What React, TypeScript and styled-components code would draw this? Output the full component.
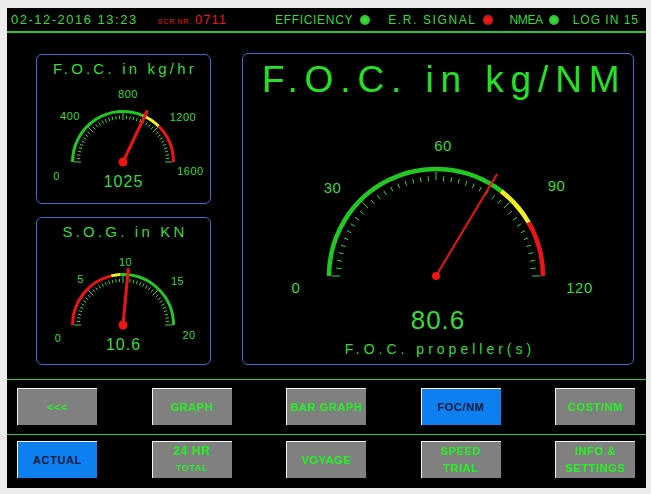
import React from "react";
import styled, { createGlobalStyle } from "styled-components";

const GREEN = "#35dc35";
const ARC_GREEN = "#22c822";
const LINE_GREEN = "#2ec82e";
const RED = "#ee1414";
const YELLOW = "#f2f020";
const FONT = `"Liberation Sans", Arial, sans-serif`;

const GlobalStyle = createGlobalStyle`
  html, body { margin: 0; padding: 0; background: #ececec; }
  body { font-family: ${FONT}; }
`;

const Page = styled.div`
  width: 651px;
  height: 494px;
  box-sizing: border-box;
  padding: 8px 0 0 7px;
`;

const Screen = styled.div`
  width: 639px;
  height: 480px;
  background: #000;
  display: flex;
  flex-direction: column;
`;

const Header = styled.header`
  height: 23px;
  flex: none;
  display: flex;
  align-items: center;
  padding: 0 7px 0 4px;
  border-bottom: 2px solid ${LINE_GREEN};
  color: ${GREEN};
`;

const DateTime = styled.span`
  font-size: 13px;
  letter-spacing: 1.5px;
  white-space: pre;
`;

const ScrLabel = styled.span`
  margin-left: 20px;
  color: ${RED};
  font-size: 7px;
  letter-spacing: 0.8px;
  align-self: center;
  padding-top: 4px;
`;

const ScrValue = styled.span`
  margin-left: 3px;
  color: ${RED};
  font-size: 13px;
  letter-spacing: 1px;
`;

const Status = styled.div`
  margin-left: auto;
  display: flex;
  align-items: center;
  font-size: 12px;
  letter-spacing: 1px;
`;

const StatusItem = styled.span<{ $gap: number; $ls?: number }>`
  margin-left: ${(p) => p.$gap}px;
  letter-spacing: ${(p) => p.$ls ?? 1}px;
  white-space: pre;
`;

const Lamp = styled.span<{ $color: "green" | "red"; $gap: number }>`
  width: 10px;
  height: 10px;
  border-radius: 50%;
  margin-left: ${(p) => p.$gap}px;
  background: ${(p) =>
    p.$color === "green"
      ? "radial-gradient(circle at 50% 50%, #3ee83e 0%, #2cc82c 55%, #6f9a6f 100%)"
      : "radial-gradient(circle at 50% 50%, #ff2020 0%, #e01010 55%, #a06060 100%)"};
`;

const Main = styled.main`
  flex: 1;
  display: flex;
  align-items: flex-start;
  padding: 20px 0 0 29px;
  gap: 31px;
`;

const LeftColumn = styled.div`
  width: 175px;
  margin-top: 1px;
  display: flex;
  flex-direction: column;
  gap: 13px;
`;

const Panel = styled.section<{ $h: number; $w: number }>`
  box-sizing: border-box;
  width: ${(p) => p.$w}px;
  height: ${(p) => p.$h}px;
  border: 1px solid #3a6cd2;
  border-radius: 6px;
  padding-top: 5px;
  display: flex;
  flex-direction: column;
  align-items: center;
  color: ${GREEN};
`;

const SmallTitle = styled.div`
  font-size: 15px;
  line-height: 17px;
  letter-spacing: 3.2px;
  padding-left: 3px;
  white-space: pre;
`;

const BigTitle = styled.div`
  align-self: flex-start;
  padding-left: 19px;
  font-size: 37px;
  line-height: 42px;
  letter-spacing: 6.9px;
  color: #26e026;
  white-space: pre;
`;

const Value = styled.div<{ $size: number; $lh: number }>`
  font-size: ${(p) => p.$size}px;
  line-height: ${(p) => p.$lh}px;
  letter-spacing: 1px;
`;

const Caption = styled.div`
  margin-top: 6px;
  font-size: 14px;
  line-height: 16px;
  letter-spacing: 4px;
  padding-left: 4px;
  white-space: pre;
`;

const DialSvg = styled.svg`
  display: block;
  overflow: visible;
  flex: none;
`;

const ButtonRow = styled.nav<{ $pt: number; $pb: number }>`
  flex: none;
  border-top: 1px solid ${LINE_GREEN};
  padding: ${(p) => p.$pt}px 11px ${(p) => p.$pb}px 10px;
  display: grid;
  grid-template-columns: repeat(5, 80px);
  justify-content: space-between;
`;

const Button = styled.div<{ $active?: boolean }>`
  box-sizing: border-box;
  height: 37px;
  border-top: 1px solid #f4f4f4;
  border-left: 1px solid #f4f4f4;
  background: ${(p) => (p.$active ? "#0d7ff0" : "#808080")};
  color: ${(p) => (p.$active ? "#0b1a3a" : "#22ee22")};
  display: flex;
  flex-direction: column;
  align-items: center;
  justify-content: center;
  font-weight: bold;
  font-size: 11px;
  line-height: 17px;
  letter-spacing: 0.6px;
  white-space: pre;
`;

const BtnLine = styled.span<{ $size?: number }>`
  font-size: ${(p) => p.$size ?? 11}px;
`;

type Seg = { from: number; to: number; color: string };
type Lbl = { text: string; dx: number; dy: number };

interface DialProps {
  width: number;
  height: number;
  cx: number;
  cy: number;
  r: number;
  stroke: number;
  min: number;
  max: number;
  value: number;
  segments: Seg[];
  divisions: number;
  majorEvery: number;
  minorR: [number, number];
  majorR: [number, number];
  labels: Lbl[];
  labelSize: number;
  needleLen: number;
  needleWidth: number;
  dotR: number;
}

function Dial(p: DialProps) {
  const ang = (v: number) => Math.PI - ((v - p.min) / (p.max - p.min)) * Math.PI;
  const pt = (v: number, r: number): [number, number] => {
    const a = ang(v);
    return [p.cx + r * Math.cos(a), p.cy - r * Math.sin(a)];
  };
  const arc = (a: number, b: number) => {
    const [x1, y1] = pt(a, p.r);
    const [x2, y2] = pt(b, p.r);
    return `M${x1.toFixed(2)} ${y1.toFixed(2)} A${p.r} ${p.r} 0 0 1 ${x2.toFixed(2)} ${y2.toFixed(2)}`;
  };
  const ticks = [];
  for (let i = 0; i <= p.divisions; i++) {
    const v = p.min + ((p.max - p.min) * i) / p.divisions;
    const major = i % p.majorEvery === 0;
    const [r1, r2] = major ? p.majorR : p.minorR;
    const [x1, y1] = pt(v, r1);
    const [x2, y2] = pt(v, r2);
    ticks.push(
      <line key={i} x1={x1} y1={y1} x2={x2} y2={y2} stroke="#3ad23a" strokeWidth={1} />
    );
  }
  const [nx, ny] = pt(p.value, p.needleLen);
  return (
    <DialSvg width={p.width} height={p.height} viewBox={`0 0 ${p.width} ${p.height}`}>
      {p.segments.map((s, i) => (
        <path key={i} d={arc(s.from, s.to)} fill="none" stroke={s.color} strokeWidth={p.stroke} />
      ))}
      {ticks}
      {p.labels.map((l) => (
        <text
          key={l.text}
          x={p.cx + l.dx}
          y={p.cy + l.dy}
          textAnchor="middle"
          dominantBaseline="central"
          fontSize={p.labelSize}
          fontFamily={FONT}
          letterSpacing={0.5}
          fill={GREEN}
        >
          {l.text}
        </text>
      ))}
      <line x1={p.cx} y1={p.cy} x2={nx} y2={ny} stroke={RED} strokeWidth={p.needleWidth} />
      <circle cx={p.cx} cy={p.cy} r={p.dotR} fill={RED} />
    </DialSvg>
  );
}

const smallBase = {
  width: 173,
  height: 96,
  cx: 86,
  cy: 85,
  r: 50.5,
  stroke: 3,
  divisions: 40,
  majorEvery: 10,
  minorR: [43, 46.5] as [number, number],
  majorR: [42, 49] as [number, number],
  labelSize: 11,
  needleLen: 57,
  needleWidth: 3,
  dotR: 4.5,
};

export default function App() {
  return (
    <Page>
      <GlobalStyle />
      <Screen>
        <Header>
          <DateTime>02-12-2016 13:23</DateTime>
          <ScrLabel>SCR.NR.</ScrLabel>
          <ScrValue>0711</ScrValue>
          <Status>
            <StatusItem $gap={0} $ls={0.7}>EFFICIENCY</StatusItem>
            <Lamp $color="green" $gap={7} />
            <StatusItem $gap={18} $ls={1.6}>E.R. SIGNAL</StatusItem>
            <Lamp $color="red" $gap={6} />
            <StatusItem $gap={17} $ls={-0.4}>NMEA</StatusItem>
            <Lamp $color="green" $gap={6} />
            <StatusItem $gap={14}>LOG IN 15</StatusItem>
          </Status>
        </Header>

        <Main>
          <LeftColumn>
            <Panel $w={175} $h={150}>
              <SmallTitle>F.O.C. in kg/hr</SmallTitle>
              <Dial
                {...smallBase}
                min={0}
                max={1600}
                value={1025}
                segments={[
                  { from: 0, to: 1000, color: ARC_GREEN },
                  { from: 1000, to: 1200, color: YELLOW },
                  { from: 1200, to: 1600, color: RED },
                ]}
                labels={[
                  { text: "0", dx: -66.5, dy: 13.5 },
                  { text: "400", dx: -53, dy: -46 },
                  { text: "800", dx: 5, dy: -68 },
                  { text: "1200", dx: 60, dy: -45 },
                  { text: "1600", dx: 67.5, dy: 9 },
                ]}
              />
              <Value $size={16} $lh={18}>1025</Value>
            </Panel>
            <Panel $w={175} $h={148}>
              <SmallTitle>S.O.G. in KN</SmallTitle>
              <Dial
                {...smallBase}
                min={0}
                max={20}
                value={10.6}
                segments={[
                  { from: 0, to: 8.5, color: RED },
                  { from: 8.5, to: 9.7, color: YELLOW },
                  { from: 9.7, to: 20, color: ARC_GREEN },
                ]}
                labels={[
                  { text: "0", dx: -65, dy: 13 },
                  { text: "5", dx: -42.5, dy: -46.5 },
                  { text: "10", dx: 2.5, dy: -63.5 },
                  { text: "15", dx: 54.5, dy: -44.5 },
                  { text: "20", dx: 66, dy: 10 },
                ]}
              />
              <Value $size={16} $lh={18}>10.6</Value>
            </Panel>
          </LeftColumn>

          <Panel $w={392} $h={312}>
            <BigTitle>F.O.C. in kg/NM</BigTitle>
            <Dial
              width={390}
              height={204}
              cx={193}
              cy={175}
              r={107}
              stroke={4.5}
              min={0}
              max={120}
              value={80.6}
              segments={[
                { from: 0, to: 85, color: ARC_GREEN },
                { from: 85, to: 100, color: YELLOW },
                { from: 100, to: 120, color: RED },
              ]}
              divisions={40}
              majorEvery={10}
              minorR={[95, 100]}
              majorR={[96, 104]}
              labels={[
                { text: "0", dx: -140, dy: 11.5 },
                { text: "30", dx: -103.5, dy: -88.5 },
                { text: "60", dx: 7, dy: -130.5 },
                { text: "90", dx: 120.5, dy: -91 },
                { text: "120", dx: 143.5, dy: 11.5 },
              ]}
              labelSize={15}
              needleLen={119}
              needleWidth={2}
              dotR={4}
            />
            <Value $size={26} $lh={30}>80.6</Value>
            <Caption>F.O.C. propeller(s)</Caption>
          </Panel>
        </Main>

        <ButtonRow $pt={8} $pb={9}>
          <Button>&lt;&lt;&lt;</Button>
          <Button>GRAPH</Button>
          <Button>BAR GRAPH</Button>
          <Button $active>FOC/NM</Button>
          <Button>COST/NM</Button>
        </ButtonRow>
        <ButtonRow $pt={6} $pb={10}>
          <Button $active>ACTUAL</Button>
          <Button>
            <BtnLine $size={12}>24 HR</BtnLine>
            <BtnLine $size={9}>TOTAL</BtnLine>
          </Button>
          <Button>VOYAGE</Button>
          <Button>
            <BtnLine>SPEED</BtnLine>
            <BtnLine>TRIAL</BtnLine>
          </Button>
          <Button>
            <BtnLine>INFO &amp;</BtnLine>
            <BtnLine>SETTINGS</BtnLine>
          </Button>
        </ButtonRow>
      </Screen>
    </Page>
  );
}
